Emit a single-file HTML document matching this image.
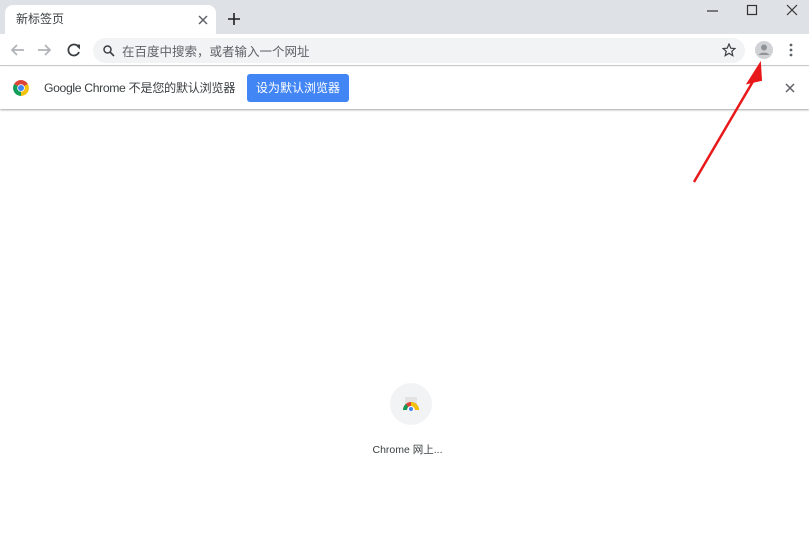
<!DOCTYPE html>
<html><head><meta charset="utf-8"><style>
*{margin:0;padding:0;box-sizing:border-box}
body{width:809px;height:536px;overflow:hidden;background:#fff;font-family:"Liberation Sans","Noto Sans CJK SC",sans-serif;position:relative}
.strip{position:absolute;left:0;top:0;width:809px;height:34px;background:#dee1e6}
.tab{position:absolute;left:5px;top:5px;width:211px;height:30px;background:#fff;border-radius:8px 8px 0 0}
.tab span{position:absolute;left:11px;top:5px;font-size:12px;color:#3c4043}
.abs{position:absolute}
.tool{position:absolute;left:0;top:34px;width:809px;height:32px;background:#fff;border-bottom:1px solid #c8c8c8}
.omni{position:absolute;left:93px;top:38px;width:652px;height:25px;background:#f1f3f4;border-radius:13px}
.omni span{position:absolute;left:29px;top:3px;font-size:12.5px;color:#5f6368}
.info{position:absolute;left:0;top:67px;width:809px;height:42px;background:#fff;box-shadow:0 1px 2px rgba(0,0,0,.35)}
.info .t{position:absolute;left:44px;top:11px;font-size:12.2px;letter-spacing:-0.35px;color:#3c4043;white-space:nowrap}
.btn{position:absolute;left:247px;top:7px;width:102px;height:28px;background:#4285f4;border-radius:3px;color:#fff;font-size:12px;text-align:center;line-height:28px}
.tile{position:absolute;left:390px;top:383px;width:42px;height:42px;border-radius:50%;background:#f1f3f4}
.lbl{position:absolute;left:3px;width:809px;top:442px;text-align:center;font-size:10.5px;color:#3c4043}
</style></head><body>
<div class="strip"></div>
<div class="tab"><span>新标签页</span>
<svg class="abs" style="left:193px;top:10px" width="10" height="10"><path d="M1 1L9 9M9 1L1 9" stroke="#5f6368" stroke-width="1.5"/></svg></div>
<svg class="abs" style="left:228px;top:13px" width="12" height="12"><path d="M6 0V12M0 6H12" stroke="#202124" stroke-width="1.6"/></svg>
<svg class="abs" style="left:705px;top:4px" width="100" height="14"><path d="M2 7H13" stroke="#333" stroke-width="1.2"/><rect x="42.5" y="1.5" width="9" height="9" fill="none" stroke="#333" stroke-width="1.2"/><path d="M82 1L92 11M92 1L82 11" stroke="#333" stroke-width="1.2"/></svg>
<div class="tool"></div>
<svg class="abs" style="left:9px;top:42px" width="80" height="16"><path d="M15 8H3M8 3L3 8L8 13" stroke="#b0b3b7" stroke-width="1.7" fill="none"/><path d="M29 8H41M36 3L41 8L36 13" stroke="#b0b3b7" stroke-width="1.7" fill="none"/><path d="M69.5 5A5.5 5.5 0 1 0 70 10" stroke="#3c4043" stroke-width="1.8" fill="none"/><path d="M66 2.5H71V7.5Z" fill="#3c4043"/></svg>
<div class="omni"><svg class="abs" style="left:10px;top:7px" width="12" height="12"><circle cx="4.5" cy="4.5" r="3.5" stroke="#3c4043" stroke-width="1.5" fill="none"/><path d="M7 7L11 11" stroke="#3c4043" stroke-width="1.6"/></svg><span>在百度中搜索，或者输入一个网址</span>
<svg class="abs" style="left:629px;top:5px" width="14" height="14"><path d="M7 1L8.8 5.2L13 5.5L9.8 8.3L10.8 12.6L7 10.3L3.2 12.6L4.2 8.3L1 5.5L5.2 5.2Z" fill="none" stroke="#3c4043" stroke-width="1.2"/></svg></div>
<svg class="abs" style="left:755px;top:41px" width="18" height="18"><circle cx="9" cy="9" r="9" fill="#d0d2d5"/><circle cx="9" cy="6.5" r="3" fill="#8f9397"/><path d="M3.5 14A6 4 0 0 1 14.5 14Z" fill="#8f9397"/></svg>
<svg class="abs" style="left:789px;top:43px" width="4" height="14"><circle cx="2" cy="2" r="1.4" fill="#5f6368"/><circle cx="2" cy="7" r="1.4" fill="#5f6368"/><circle cx="2" cy="12" r="1.4" fill="#5f6368"/></svg>
<div class="info">
<svg class="abs" style="left:13px;top:13px" width="16" height="16" viewBox="0 0 16 16"><path d="M8 8L1.1 4A8 8 0 0 1 14.9 4Z" fill="#db4437"/><path d="M8 8L14.9 4A8 8 0 0 1 8 16Z" fill="#f4c20d"/><path d="M8 8L8 16A8 8 0 0 1 1.1 4Z" fill="#0f9d58"/><circle cx="8" cy="8" r="3.8" fill="#fff"/><circle cx="8" cy="8" r="3" fill="#4285f4"/></svg>
<span class="t">Google Chrome 不是您的默认浏览器</span>
<div class="btn">设为默认浏览器</div>
<svg class="abs" style="left:785px;top:16px" width="10" height="10"><path d="M1 1L9 9M9 1L1 9" stroke="#5f6368" stroke-width="1.5"/></svg>
</div>
<svg class="abs" style="left:0;top:0" width="809" height="200"><path d="M694 182L755 78" stroke="#e8191b" stroke-width="2.5"/><path d="M760 64L748 83L761 80Z" fill="#e8191b" stroke="#e8191b" stroke-width="2"/></svg>
<div class="tile"><svg class="abs" style="left:12px;top:14px" width="18" height="14"><rect x="3" y="0" width="12" height="10" fill="#e3e3e3"/><path d="M1 13A8 8 0 0 1 17 13H13A4 4 0 0 0 5 13Z" fill="#db4437"/><path d="M9 5A8 8 0 0 1 17 13H13A4 4 0 0 0 9 9Z" fill="#f4c20d"/><path d="M1 13A8 8 0 0 1 4 7L6 10A4 4 0 0 0 5 13Z" fill="#0f9d58"/><circle cx="9" cy="12" r="2.5" fill="#4285f4" stroke="#fff"/></svg></div>
<div class="lbl">Chrome 网上...</div>
</body></html>
